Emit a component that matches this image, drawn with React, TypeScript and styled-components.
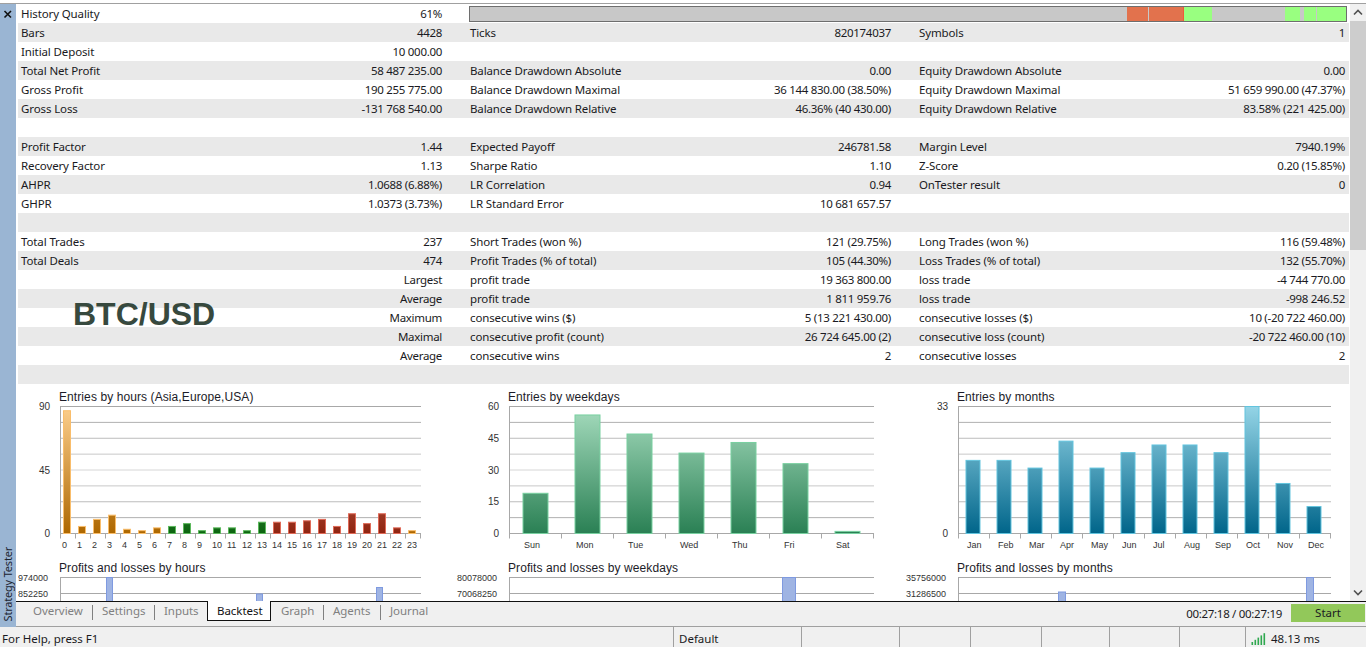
import React from "react";
import styled, { createGlobalStyle } from "styled-components";

const Global = createGlobalStyle`
  html, body { margin: 0; padding: 0; height: 100%; background: #fff; overflow: hidden; }
  #root { height: 647px; }
`;

const UI = `"Noto Sans", "Open Sans", sans-serif`;
const CHART = `"Liberation Sans", Arial, sans-serif`;

const Window = styled.div`
  width: 1366px;
  height: 647px;
  display: flex;
  flex-direction: column;
  font-family: ${UI};
  font-size: 11.5px;
  color: #1a1a22;
  overflow: hidden;
`;
const TopEdge = styled.div`
  flex: none;
  box-sizing: border-box;
  height: 4px;
  background: #fff;
  border-bottom: 1px solid #a0a0a0;
`;
const Body = styled.div`
  flex: none;
  height: 623px;
  display: flex;
`;
const Dock = styled.div`
  position: relative;
  width: 16px;
  flex: none;
  background: #9ab5d3;
`;
const CloseMark = styled.span`
  position: absolute;
  left: 2px;
  top: 4px;
  width: 12px;
  height: 12px;
`;
const DockLabel = styled.span`
  position: absolute;
  left: 0;
  bottom: 6px;
  width: 16px;
  writing-mode: vertical-rl;
  transform: rotate(180deg);
  line-height: 16px;
  font-size: 11px;
  letter-spacing: -0.2px;
  color: #1c2430;
`;
const Side = styled.div`
  flex: 1;
  min-width: 0;
  display: flex;
  flex-direction: column;
`;
const Main = styled.div`
  flex: none;
  height: 597px;
  display: flex;
`;
const Report = styled.div`
  position: relative;
  flex: none;
  width: 1331px;
  margin: 0 1px 0 2px;
  overflow: hidden;
`;
const Row = styled.div<{ $shade: boolean }>`
  height: 19px;
  display: grid;
  grid-template-columns: 449px 449px 1fr;
  background: ${(p) => (p.$shade ? "#e9e9e9" : "#fff")};
`;
const Cell = styled.div<{ $last?: boolean }>`
  display: flex;
  justify-content: space-between;
  align-items: center;
  padding: 0 ${(p) => (p.$last ? "4px" : "25px")} 0 3px;
  white-space: nowrap;
  line-height: 19px;
`;
const Label = styled.span`
  letter-spacing: -0.12px;
`;
const Value = styled.span`
  margin-left: auto;
  letter-spacing: -0.3px;
`;
const Meter = styled.div`
  position: relative;
  grid-column: 2 / 4;
  width: 878px;
  height: 16px;
  margin: 2px 0 0 2px;
  box-sizing: border-box;
  border: 1px solid #6e6e6e;
  background: #c8c8c8;
`;
const MeterPart = styled.i<{ $c: string; $w: number; $x: number }>`
  position: absolute;
  top: 0;
  bottom: 0;
  left: ${(p) => p.$x}px;
  width: ${(p) => p.$w}px;
  background: ${(p) => p.$c};
`;
const Stamp = styled.div`
  position: absolute;
  left: 55px;
  top: 292px;
  font: bold 32px/36px ${CHART};
  color: #37493e;
`;
const Charts = styled.div`
  display: grid;
  grid-template-columns: 449px 449px 433px;
  height: 217px;
  overflow: hidden;
`;
const ChartCell = styled.svg`
  display: block;
  width: 100%;
  height: 217px;
  overflow: visible;
`;
const Scroll = styled.div`
  position: relative;
  flex: none;
  width: 16px;
  background: #f0f0f0;
`;
const ScrollBtn = styled.div`
  height: 17px;
  display: flex;
  align-items: center;
  justify-content: center;
`;
const Thumb = styled.div`
  height: 229px;
  background: #cdcdcd;
`;
const ScrollFoot = styled.div`
  position: absolute;
  left: 0;
  right: 0;
  bottom: 0;
`;
const TabBar = styled.div`
  flex: 1;
  box-sizing: border-box;
  display: flex;
  align-items: flex-start;
  background: #f0f0f0;
  border-top: 1px solid #111;
  border-bottom: 1px solid #a0a0a0;
`;
const Tabs = styled.div`
  display: flex;
  margin-left: 7px;
  align-items: flex-start;
`;
const Tab = styled.div<{ $w: number; $pad: number; $sep?: boolean }>`
  box-sizing: border-box;
  width: ${(p) => p.$w}px;
  height: 15px;
  margin-top: 3px;
  padding-left: ${(p) => p.$pad}px;
  line-height: 12px;
  font-size: 11.5px;
  letter-spacing: -0.05px;
  white-space: nowrap;
  color: #808080;
  border-right: ${(p) => (p.$sep ? "1px solid #808080" : "none")};
`;
const ActiveTab = styled.div<{ $w: number }>`
  box-sizing: border-box;
  width: ${(p) => p.$w}px;
  height: 20px;
  margin-top: -1px;
  padding-left: 9px;
  line-height: 20px;
  font-size: 11.5px;
  letter-spacing: -0.05px;
  color: #111;
  background: #fff;
  border: 1px solid #111;
  border-top: none;
`;
const TabTools = styled.div`
  margin-left: auto;
  display: flex;
  align-items: flex-start;
`;
const Timer = styled.span`
  margin: 3px 9px 0 0;
  line-height: 18px;
  letter-spacing: -0.3px;
`;
const Start = styled.div`
  width: 74px;
  height: 18px;
  margin: 2px 1px 0 0;
  line-height: 18px;
  text-align: center;
  background: #92c85a;
`;
const Status = styled.div`
  flex: 1;
  display: flex;
  background: #f0f0f0;
  line-height: 20px;
`;
const StatusCell = styled.div<{ $w: number; $grow?: boolean }>`
  width: ${(p) => p.$w}px;
  flex: ${(p) => (p.$grow ? 1 : "none")};
  box-sizing: border-box;
  padding: 2px 0 0 5px;
  display: flex;
  align-items: center;
  gap: 5px;
  border-left: 1px solid #a0a0a0;
  white-space: nowrap;
  &:first-child { border-left: none; padding-left: 2px; }
`;

const rows: ([string, string] | null)[][] = [
  [["History Quality", "61%"], null, null],
  [["Bars", "4428"], ["Ticks", "820174037"], ["Symbols", "1"]],
  [["Initial Deposit", "10 000.00"], null, null],
  [["Total Net Profit", "58 487 235.00"], ["Balance Drawdown Absolute", "0.00"], ["Equity Drawdown Absolute", "0.00"]],
  [["Gross Profit", "190 255 775.00"], ["Balance Drawdown Maximal", "36 144 830.00 (38.50%)"], ["Equity Drawdown Maximal", "51 659 990.00 (47.37%)"]],
  [["Gross Loss", "-131 768 540.00"], ["Balance Drawdown Relative", "46.36% (40 430.00)"], ["Equity Drawdown Relative", "83.58% (221 425.00)"]],
  [null, null, null],
  [["Profit Factor", "1.44"], ["Expected Payoff", "246781.58"], ["Margin Level", "7940.19%"]],
  [["Recovery Factor", "1.13"], ["Sharpe Ratio", "1.10"], ["Z-Score", "0.20 (15.85%)"]],
  [["AHPR", "1.0688 (6.88%)"], ["LR Correlation", "0.94"], ["OnTester result", "0"]],
  [["GHPR", "1.0373 (3.73%)"], ["LR Standard Error", "10 681 657.57"], null],
  [null, null, null],
  [["Total Trades", "237"], ["Short Trades (won %)", "121 (29.75%)"], ["Long Trades (won %)", "116 (59.48%)"]],
  [["Total Deals", "474"], ["Profit Trades (% of total)", "105 (44.30%)"], ["Loss Trades (% of total)", "132 (55.70%)"]],
  [["", "Largest"], ["profit trade", "19 363 800.00"], ["loss trade", "-4 744 770.00"]],
  [["", "Average"], ["profit trade", "1 811 959.76"], ["loss trade", "-998 246.52"]],
  [["", "Maximum"], ["consecutive wins ($)", "5 (13 221 430.00)"], ["consecutive losses ($)", "10 (-20 722 460.00)"]],
  [["", "Maximal"], ["consecutive profit (count)", "26 724 645.00 (2)"], ["consecutive loss (count)", "-20 722 460.00 (10)"]],
  [["", "Average"], ["consecutive wins", "2"], ["consecutive losses", "2"]],
  [null, null, null],
];

const meterParts = [
  { x: 657, w: 21, c: "#e2724d" },
  { x: 679, w: 34, c: "#e2724d" },
  { x: 713, w: 1, c: "#ee5a3a" },
  { x: 714, w: 28, c: "#99ff80" },
  { x: 815, w: 15, c: "#99ff80" },
  { x: 834, w: 12, c: "#99ff80" },
  { x: 847, w: 29, c: "#99ff80" },
];

type ChartDef = {
  id: string;
  ox: number;
  vw: number;
  x0: number;
  x1: number;
  title: string;
  pnlTitle: string;
  yLabels: [string, number][];
  max: number;
  values: number[];
  step: number;
  barX: number;
  barW: number;
  labels: string[];
  labelX: number;
  colour: (i: number) => string;
  pnlLabels: [string, string];
  pnlBars: { x: number; w: number; y: number }[];
};

const hourColour = (i: number) => (i <= 6 || i === 23 ? "o" : i <= 13 ? "g" : "r");

const defs: ChartDef[] = [
  {
    id: "h", ox: 18, vw: 449, x0: 60, x1: 421,
    title: "Entries by hours (Asia,Europe,USA)",
    pnlTitle: "Profits and losses by hours",
    yLabels: [["90", 0], ["45", 4], ["0", 8]],
    max: 90,
    values: [87, 5, 10, 13, 3, 2, 4, 5, 7, 2, 4, 4, 2, 8, 8, 8, 9, 10, 5, 14, 7, 14, 4, 2],
    step: 15, barX: 63, barW: 8,
    labels: Array.from({ length: 24 }, (_, i) => String(i)),
    labelX: 62,
    colour: hourColour,
    pnlLabels: ["974000", "852250"],
    pnlBars: [{ x: 106.5, w: 6, y: 577.5 }, { x: 256.5, w: 6, y: 594 }, { x: 376.5, w: 6, y: 587.5 }],
  },
  {
    id: "w", ox: 467, vw: 449, x0: 509, x1: 874,
    title: "Entries by weekdays",
    pnlTitle: "Profits and losses by weekdays",
    yLabels: [["60", 0], ["45", 2], ["30", 4], ["15", 6], ["0", 8]],
    max: 60,
    values: [19, 56, 47, 38, 43, 33, 1],
    step: 52, barX: 522.5, barW: 26,
    labels: ["Sun", "Mon", "Tue", "Wed", "Thu", "Fri", "Sat"],
    labelX: 524,
    colour: () => "t",
    pnlLabels: ["80078000", "70068250"],
    pnlBars: [{ x: 782.5, w: 13, y: 577.5 }],
  },
  {
    id: "m", ox: 916, vw: 433, x0: 958, x1: 1331,
    title: "Entries by months",
    pnlTitle: "Profits and losses by months",
    yLabels: [["33", 0], ["0", 8]],
    max: 33,
    values: [19, 19, 17, 24, 17, 21, 23, 23, 21, 33, 13, 7],
    step: 31, barX: 965.5, barW: 15,
    labels: ["Jan", "Feb", "Mar", "Apr", "May", "Jun", "Jul", "Aug", "Sep", "Oct", "Nov", "Dec"],
    labelX: 967,
    colour: () => "b",
    pnlLabels: ["35756000", "31286500"],
    pnlBars: [{ x: 1058.5, w: 7, y: 592 }, { x: 1306.5, w: 7, y: 577.5 }],
  },
];

const ramps: Record<string, { top: string; bottom: string; edge: string }> = {
  o: { top: "#fdcf8d", bottom: "#ad6700", edge: "#f9bd6b" },
  g: { top: "#8fd08f", bottom: "#0c6410", edge: "#5cb85c" },
  r: { top: "#e8a090", bottom: "#8f2410", edge: "#e06a58" },
  t: { top: "#a6dcbe", bottom: "#2a8054", edge: "#78d0a0" },
  b: { top: "#94d4e6", bottom: "#00658a", edge: "#62c4de" },
};

const gridShades = ["#a8a8a8", "#b0b0b0", "#bcbcbc", "#c8c8c8", "#d6d6d6"];
const TOP = 406.5;
const BOTTOM = 533.5;

const Chart = ({ d }: { d: ChartDef }) => {
  const gridYs = Array.from({ length: 9 }, (_, i) => TOP + (i * (BOTTOM - TOP)) / 8);
  const ticks = Array.from({ length: d.values.length + 1 }, (_, i) => d.x0 + i * d.step).filter((x) => x <= d.x1);
  return (
    <ChartCell viewBox={`${d.ox} 384 ${d.vw} 217`}>
      <defs>
        {Object.entries(ramps).map(([k, r]) => (
          <linearGradient key={k} id={`${d.id}${k}`} gradientUnits="userSpaceOnUse" x1="0" x2="0" y1={TOP} y2={BOTTOM}>
            <stop offset="0" stopColor={r.top} />
            <stop offset="1" stopColor={r.bottom} />
          </linearGradient>
        ))}
      </defs>
      <text x={d.x0 - 1} y={401} fontFamily={CHART} fontSize="12" letterSpacing="0.09" fill="#1c1c28">{d.title}</text>
      {gridYs.map((y, i) => (
        <line key={i} x1={d.x0} x2={d.x1} y1={y} y2={y} stroke={gridShades[4 - Math.abs(4 - i)]} />
      ))}
      <line x1={d.x0 + 0.5} x2={d.x0 + 0.5} y1={TOP} y2={BOTTOM} stroke="#a8a8a8" />
      {d.yLabels.map(([t, i]) => (
        <text key={t} x={d.x0 - 10} y={gridYs[i] + 3.5} textAnchor="end" fontFamily={CHART} fontSize="10" fill="#333">{t}</text>
      ))}
      {ticks.map((x) => (
        <line key={x} x1={x + 0.5} x2={x + 0.5} y1={BOTTOM} y2={BOTTOM + 5} stroke="#a8a8a8" />
      ))}
      {d.values.map((v, i) => {
        const h = (v / d.max) * (BOTTOM - TOP);
        const k = d.colour(i);
        return (
          <rect key={i} x={d.barX + i * d.step + 0.5} y={BOTTOM - h} width={d.barW - 1} height={h}
            fill={`url(#${d.id}${k})`} stroke={ramps[k].edge} strokeWidth="1" />
        );
      })}
      {d.labels.map((t, i) => (
        <text key={t} x={d.labelX + i * d.step} y={548} fontFamily={CHART} fontSize="9" fill="#333">{t}</text>
      ))}
      <text x={d.x0 - 1} y={572} fontFamily={CHART} fontSize="12" letterSpacing="0.09" fill="#1c1c28">{d.pnlTitle}</text>
      {[577.5, 593.5].map((y) => (
        <line key={y} x1={d.x0} x2={d.x1} y1={y} y2={y} stroke="#a8a8a8" />
      ))}
      <line x1={d.x0 + 0.5} x2={d.x0 + 0.5} y1={577} y2={601} stroke="#a8a8a8" />
      {d.pnlLabels.map((t, i) => (
        <text key={t} x={d.x0 - 12} y={581 + i * 16} textAnchor="end" fontFamily={CHART} fontSize="9" fill="#333">{t}</text>
      ))}
      {d.pnlBars.map((b, i) => (
        <rect key={i} x={b.x} y={b.y} width={b.w} height={604 - b.y} fill="#9fb4e3" stroke="#7f9ae0" />
      ))}
    </ChartCell>
  );
};

export default function App() {
  return (
    <Window>
      <Global />
      <TopEdge />
      <Body>
        <Dock>
          <CloseMark>
            <svg width="12" height="12" viewBox="0 0 12 12">
              <path d="M2.5 3 L9 9.5 M9 3 L2.5 9.5" stroke="#111" strokeWidth="1.6" fill="none" />
            </svg>
          </CloseMark>
          <DockLabel>Strategy Tester</DockLabel>
        </Dock>
        <Side>
          <Main>
            <Report>
              {rows.map((row, r) => (
                <Row key={r} $shade={r % 2 === 1}>
                  {row.map((c, i) => {
                    if (r === 0 && i === 1) {
                      return (
                        <Meter key={i}>
                          {meterParts.map((m, j) => (
                            <MeterPart key={j} $x={m.x} $w={m.w} $c={m.c} />
                          ))}
                        </Meter>
                      );
                    }
                    if (r === 0 && i === 2) return null;
                    return (
                      <Cell key={i} $last={i === 2}>
                        {c && c[0] ? <Label>{c[0]}</Label> : null}
                        {c ? <Value>{c[1]}</Value> : null}
                      </Cell>
                    );
                  })}
                </Row>
              ))}
              <Stamp>BTC/USD</Stamp>
              <Charts>
                {defs.map((d) => (
                  <Chart key={d.id} d={d} />
                ))}
              </Charts>
            </Report>
            <Scroll>
              <ScrollBtn>
                <svg width="10" height="7" viewBox="0 0 10 7">
                  <path d="M1 5.5 L5 1.5 L9 5.5" stroke="#505050" strokeWidth="1.6" fill="none" />
                </svg>
              </ScrollBtn>
              <Thumb />
              <ScrollFoot>
                <ScrollBtn>
                  <svg width="10" height="7" viewBox="0 0 10 7">
                    <path d="M1 1.5 L5 5.5 L9 1.5" stroke="#505050" strokeWidth="1.6" fill="none" />
                  </svg>
                </ScrollBtn>
              </ScrollFoot>
            </Scroll>
          </Main>
          <TabBar>
            <Tabs>
              <Tab $w={70} $pad={10} $sep>Overview</Tab>
              <Tab $w={62} $pad={9} $sep>Settings</Tab>
              <Tab $w={52} $pad={9}>Inputs</Tab>
              <ActiveTab $w={64}>Backtest</ActiveTab>
              <Tab $w={53} $pad={10} $sep>Graph</Tab>
              <Tab $w={57} $pad={9} $sep>Agents</Tab>
              <Tab $w={60} $pad={9}>Journal</Tab>
            </Tabs>
            <TabTools>
              <Timer>00:27:18 / 00:27:19</Timer>
              <Start>Start</Start>
            </TabTools>
          </TabBar>
        </Side>
      </Body>
      <Status>
        <StatusCell $w={673}>For Help, press F1</StatusCell>
        <StatusCell $w={128}>Default</StatusCell>
        <StatusCell $w={98} />
        <StatusCell $w={71} />
        <StatusCell $w={71} />
        <StatusCell $w={68} />
        <StatusCell $w={70} />
        <StatusCell $w={66} />
        <StatusCell $w={121} $grow>
          <svg width="15" height="12" viewBox="0 0 15 12">
            {[0, 1, 2, 3, 4].map((i) => (
              <rect key={i} x={i * 3 + 0.5} y={9 - i * 2.2} width="1.6" height={3 + i * 2.2} fill="#2fa84f" />
            ))}
          </svg>
          48.13 ms
        </StatusCell>
      </Status>
    </Window>
  );
}
